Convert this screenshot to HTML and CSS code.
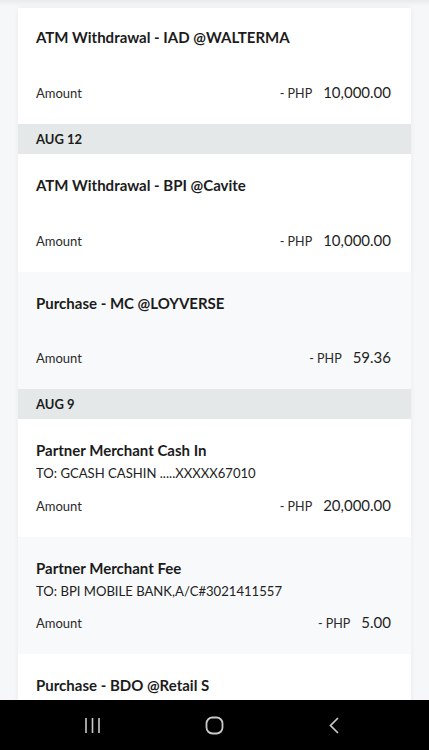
FILE: index.html
```html
<!DOCTYPE html>
<html lang="en">
<head>
    <meta charset="UTF-8">
    <meta name="viewport" content="width=device-width, initial-scale=1.0">
    <title>Transactions</title>
    <link rel="stylesheet" href="styles.css">
</head>
<body>
    <div class="top-shade"></div>
    <div class="page">
        <div class="card">
            <div class="txn txn-first">
                <div class="txn-title">ATM Withdrawal - IAD @WALTERMA</div>
                <div class="txn-amount">
                    <span class="label">Amount</span>
                    <span class="value"><span class="cur">- PHP</span>10,000.00</span>
                </div>
            </div>

            <div class="date-head">AUG 12</div>

            <div class="txn">
                <div class="txn-title">ATM Withdrawal - BPI @Cavite</div>
                <div class="txn-amount">
                    <span class="label">Amount</span>
                    <span class="value"><span class="cur">- PHP</span>10,000.00</span>
                </div>
            </div>
            <div class="txn alt">
                <div class="txn-title">Purchase - MC @LOYVERSE</div>
                <div class="txn-amount">
                    <span class="label">Amount</span>
                    <span class="value"><span class="cur">- PHP</span>59.36</span>
                </div>
            </div>

            <div class="date-head">AUG 9</div>

            <div class="txn">
                <div class="txn-title">Partner Merchant Cash In</div>
                <div class="txn-sub">TO: GCASH CASHIN .....XXXXX67010</div>
                <div class="txn-amount">
                    <span class="label">Amount</span>
                    <span class="value"><span class="cur">- PHP</span>20,000.00</span>
                </div>
            </div>
            <div class="txn alt">
                <div class="txn-title">Partner Merchant Fee</div>
                <div class="txn-sub">TO: BPI MOBILE BANK,A/C#3021411557</div>
                <div class="txn-amount">
                    <span class="label">Amount</span>
                    <span class="value"><span class="cur">- PHP</span>5.00</span>
                </div>
            </div>
            <div class="txn">
                <div class="txn-title">Purchase - BDO @Retail S</div>
            </div>
        </div>
    </div>

    <div class="navbar">
        <svg width="17" height="17" viewBox="0 0 17 17">
            <path d="M2 1v15M8.5 1v15M15 1v15" stroke="#c9c9c9" stroke-width="1.6" fill="none"/>
        </svg>
        <svg width="19" height="19" viewBox="0 0 19 19">
            <rect x="1.5" y="1.5" width="16" height="16" rx="6" stroke="#c9c9c9" stroke-width="1.8" fill="none"/>
        </svg>
        <svg width="12" height="17" viewBox="0 0 12 17">
            <path d="M10 1L2.5 8.5L10 16" stroke="#c9c9c9" stroke-width="1.7" fill="none"/>
        </svg>
    </div>
</body>
</html>
```

FILE: styles.css
```css
body {
    font-family: Lato, "Open Sans", sans-serif;
    background-color: #f6f7f8;
    margin: 0;
    padding: 0;
    height: 750px;
    overflow: hidden;
    color: #1c1c1c;
}
.top-shade {
    position: absolute;
    top: 0;
    left: 0;
    right: 0;
    height: 6px;
    background: linear-gradient(#e9eaeb, rgba(246, 247, 248, 0));
    z-index: 2;
}
.page {
    padding: 8px 18px 0 18px;
    height: 692px;
    overflow: hidden;
}
.card {
    background-color: white;
    box-shadow: 0 0 6px rgba(0, 0, 0, 0.05);
}
.txn {
    height: 117.5px;
    box-sizing: border-box;
    padding: 21px 20px 20px 18px;
    display: flex;
    flex-direction: column;
    background-color: white;
}
.txn.txn-first {
    height: 116px;
    padding-top: 19px;
}
.txn.alt {
    background-color: #f8f9fa;
}
.txn-title {
    font-size: 15px;
    font-weight: 700;
    line-height: 20px;
}
.txn-sub {
    font-size: 13.1px;
    line-height: 18px;
    margin-top: 4px;
    color: #222;
}
.txn-amount {
    margin-top: auto;
    display: flex;
    justify-content: space-between;
    align-items: baseline;
    line-height: 20px;
}
.label {
    font-size: 13px;
    color: #2a2a2a;
}
.value {
    font-size: 15px;
    color: #1f1f1f;
}
.cur {
    font-size: 12.5px;
    margin-right: 11px;
    color: #2a2a2a;
}
.date-head {
    height: 30px;
    line-height: 30px;
    padding-left: 18px;
    background-color: #e5e8e9;
    font-size: 13px;
    font-weight: 700;
}
.navbar {
    height: 50px;
    background-color: #000;
    display: flex;
    align-items: center;
    justify-content: space-between;
    padding: 0 89px 0 84px;
}
```
